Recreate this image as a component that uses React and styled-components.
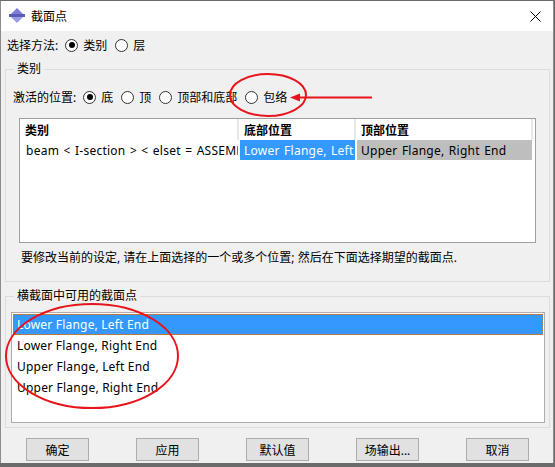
import React from 'react'
import styled, { createGlobalStyle } from 'styled-components'

const GlobalStyle = createGlobalStyle`
  html, body {
    margin: 0;
    padding: 0;
    background: #6b6b6b;
  }
  body {
    font-family: "Noto Sans", "Noto Sans CJK SC", sans-serif;
    font-size: 12px;
    color: #000;
  }
`

const Window = styled.div`
  position: relative;
  width: 554px;
  margin-top: 1px;
  box-sizing: border-box;
  border-left: 1px solid #8c8c8c;
  border-right: 1px solid #8c8c8c;
  display: flex;
  flex-direction: column;
`

const TitleBar = styled.div`
  height: 30px;
  background: #fff;
  display: flex;
  align-items: center;
  padding-left: 8px;
  gap: 6px;
`

const Title = styled.span`
  font-size: 12px;
  flex: 1;
`

const CloseButton = styled.div`
  width: 36px;
  display: flex;
  justify-content: center;
`

const Body = styled.div`
  background: #f0f0f0;
  padding: 4px 2px 2px 4px;
  display: flex;
  flex-direction: column;
`

const Row = styled.div`
  height: 20px;
  display: flex;
  align-items: center;
  padding-left: ${(p) => p.indent || 0}px;
`

const Option = styled.label`
  display: flex;
  align-items: center;
  margin-left: 7px;
  gap: 5px;
  margin-right: 1px;
`

const Radio = styled.span`
  width: 11px;
  height: 11px;
  border: 1px solid #333;
  border-radius: 50%;
  background: #fff;
  display: flex;
  align-items: center;
  justify-content: center;
  &::after {
    content: '';
    width: 6px;
    height: 6px;
    border-radius: 50%;
    background: ${(p) => (p.checked ? '#000' : 'transparent')};
  }
`

const Group = styled.div`
  position: relative;
  border: 1px solid #dcdcdc;
  margin-top: ${(p) => p.top}px;
  margin-right: 1px;
  padding: ${(p) => p.pad};
  display: flex;
  flex-direction: column;
`

const GroupLabel = styled.span`
  position: absolute;
  top: -9px;
  left: 8px;
  padding: 0 3px;
  line-height: 16px;
  background: #f0f0f0;
`

const TableBox = styled.div`
  margin-top: 11px;
  margin-left: 6px;
  height: 125px;
  box-sizing: border-box;
  border: 1px solid #a0a0a0;
  background: #fff;
`

const TableRow = styled.div`
  display: grid;
  grid-template-columns: 219px 117px 177px;
  height: ${(p) => p.h}px;
`

const HeadCell = styled.div`
  font-weight: bold;
  display: flex;
  align-items: center;
  padding-left: 5px;
  border-right: 2px solid #e8e8e8;
  white-space: nowrap;
  overflow: hidden;
`

const Cell = styled.div`
  display: flex;
  align-items: center;
  padding-left: ${(p) => (p.first ? 6 : 4)}px;
  white-space: nowrap;
  overflow: hidden;
  letter-spacing: 0.25px;
  word-spacing: 1px;
  background: ${(p) => p.bg || '#fff'};
  color: ${(p) => p.fg || '#000'};
  border-right: 1px solid #fff;
  margin-left: ${(p) => (p.first ? 0 : 1)}px;
`

const Hint = styled.div`
  margin-top: 7px;
  padding-left: 8px;
  line-height: 16px;
`

const ListBox = styled.div`
  height: 111px;
  box-sizing: border-box;
  border: 1px solid #adadad;
  background: #fff;
  padding: 1px;
`

const ListItem = styled.div`
  height: 21px;
  box-sizing: border-box;
  display: flex;
  align-items: center;
  padding-left: 3px;
  letter-spacing: 0.2px;
  background: ${(p) => (p.selected ? '#3399ff' : 'transparent')};
  color: ${(p) => (p.selected ? '#fff' : '#000')};
  border: 1px dotted ${(p) => (p.selected ? '#c07a3a' : 'transparent')};
`

const ButtonBar = styled.div`
  display: flex;
  gap: 47px;
  margin-top: 10px;
  padding-left: 21px;
`

const Button = styled.button`
  width: 63px;
  height: 23px;
  padding: 0;
  border: 1px solid #adadad;
  background: #e1e1e1;
  font-family: "Noto Sans", "Noto Sans CJK SC", sans-serif;
  font-size: 12px;
  color: #000;
`

const Annotations = styled.svg`
  position: absolute;
  left: -1px;
  top: -1px;
  pointer-events: none;
`

const AppIcon = () => (
  <svg width="16" height="16" viewBox="0 0 16 16">
    <polygon points="8,0 14,6 2,6" fill="#7d7dd6" />
    <rect x="0" y="6" width="16" height="3" fill="#5a5ab8" />
    <polygon points="2,9 14,9 8,15" fill="#9a9ae0" />
  </svg>
)

const CloseIcon = () => (
  <svg width="11" height="11" viewBox="0 0 11 11">
    <path d="M0.5 0.5 L10.5 10.5 M10.5 0.5 L0.5 10.5" stroke="#000" strokeWidth="1" />
  </svg>
)

const points = [
  'Lower Flange, Left End',
  'Lower Flange, Right End',
  'Upper Flange, Left End',
  'Upper Flange, Right End',
]

export default function App() {
  return (
    <>
      <GlobalStyle />
      <Window>
        <TitleBar>
          <AppIcon />
          <Title>截面点</Title>
          <CloseButton>
            <CloseIcon />
          </CloseButton>
        </TitleBar>
        <Body>
          <Row indent={2}>
            选择方法:
            <Option>
              <Radio checked />
              类别
            </Option>
            <Option>
              <Radio />层
            </Option>
          </Row>

          <Group top={14} pad="17px 13px 15px 7px">
            <GroupLabel>类别</GroupLabel>
            <Row>
              激活的位置:
              <Option>
                <Radio checked />底
              </Option>
              <Option>
                <Radio />顶
              </Option>
              <Option>
                <Radio />顶部和底部
              </Option>
              <Option>
                <Radio />包络
              </Option>
            </Row>
            <TableBox>
              <TableRow h={21}>
                <HeadCell>类别</HeadCell>
                <HeadCell>底部位置</HeadCell>
                <HeadCell>顶部位置</HeadCell>
              </TableRow>
              <TableRow h={20}>
                <Cell first>beam &lt; I-section &gt; &lt; elset = ASSEMBLY__PICKEDSET2 &gt;</Cell>
                <Cell bg="#3399ff" fg="#fff">Lower Flange, Left End</Cell>
                <Cell bg="#bebebe">Upper Flange, Right End</Cell>
              </TableRow>
            </TableBox>
            <Hint>要修改当前的设定, 请在上面选择的一个或多个位置; 然后在下面选择期望的截面点.</Hint>
          </Group>

          <Group top={14} pad="15px 4px 4px 5px">
            <GroupLabel>横截面中可用的截面点</GroupLabel>
            <ListBox>
              {points.map((p, i) => (
                <ListItem key={p} selected={i === 0}>
                  {p}
                </ListItem>
              ))}
            </ListBox>
          </Group>

          <ButtonBar>
            <Button>确定</Button>
            <Button>应用</Button>
            <Button>默认值</Button>
            <Button>场输出...</Button>
            <Button>取消</Button>
          </ButtonBar>
        </Body>

        <Annotations width="555" height="467">
          <ellipse cx="268" cy="95" rx="38" ry="21" fill="none" stroke="#e8141b" strokeWidth="2" />
          <line x1="372" y1="97.5" x2="298" y2="97.5" stroke="#e8141b" strokeWidth="2" />
          <polygon points="290,97.5 300,93.5 300,101.5" fill="#e8141b" />
          <ellipse cx="92" cy="356" rx="86" ry="52" fill="none" stroke="#e8141b" strokeWidth="2" />
        </Annotations>
      </Window>
    </>
  )
}
